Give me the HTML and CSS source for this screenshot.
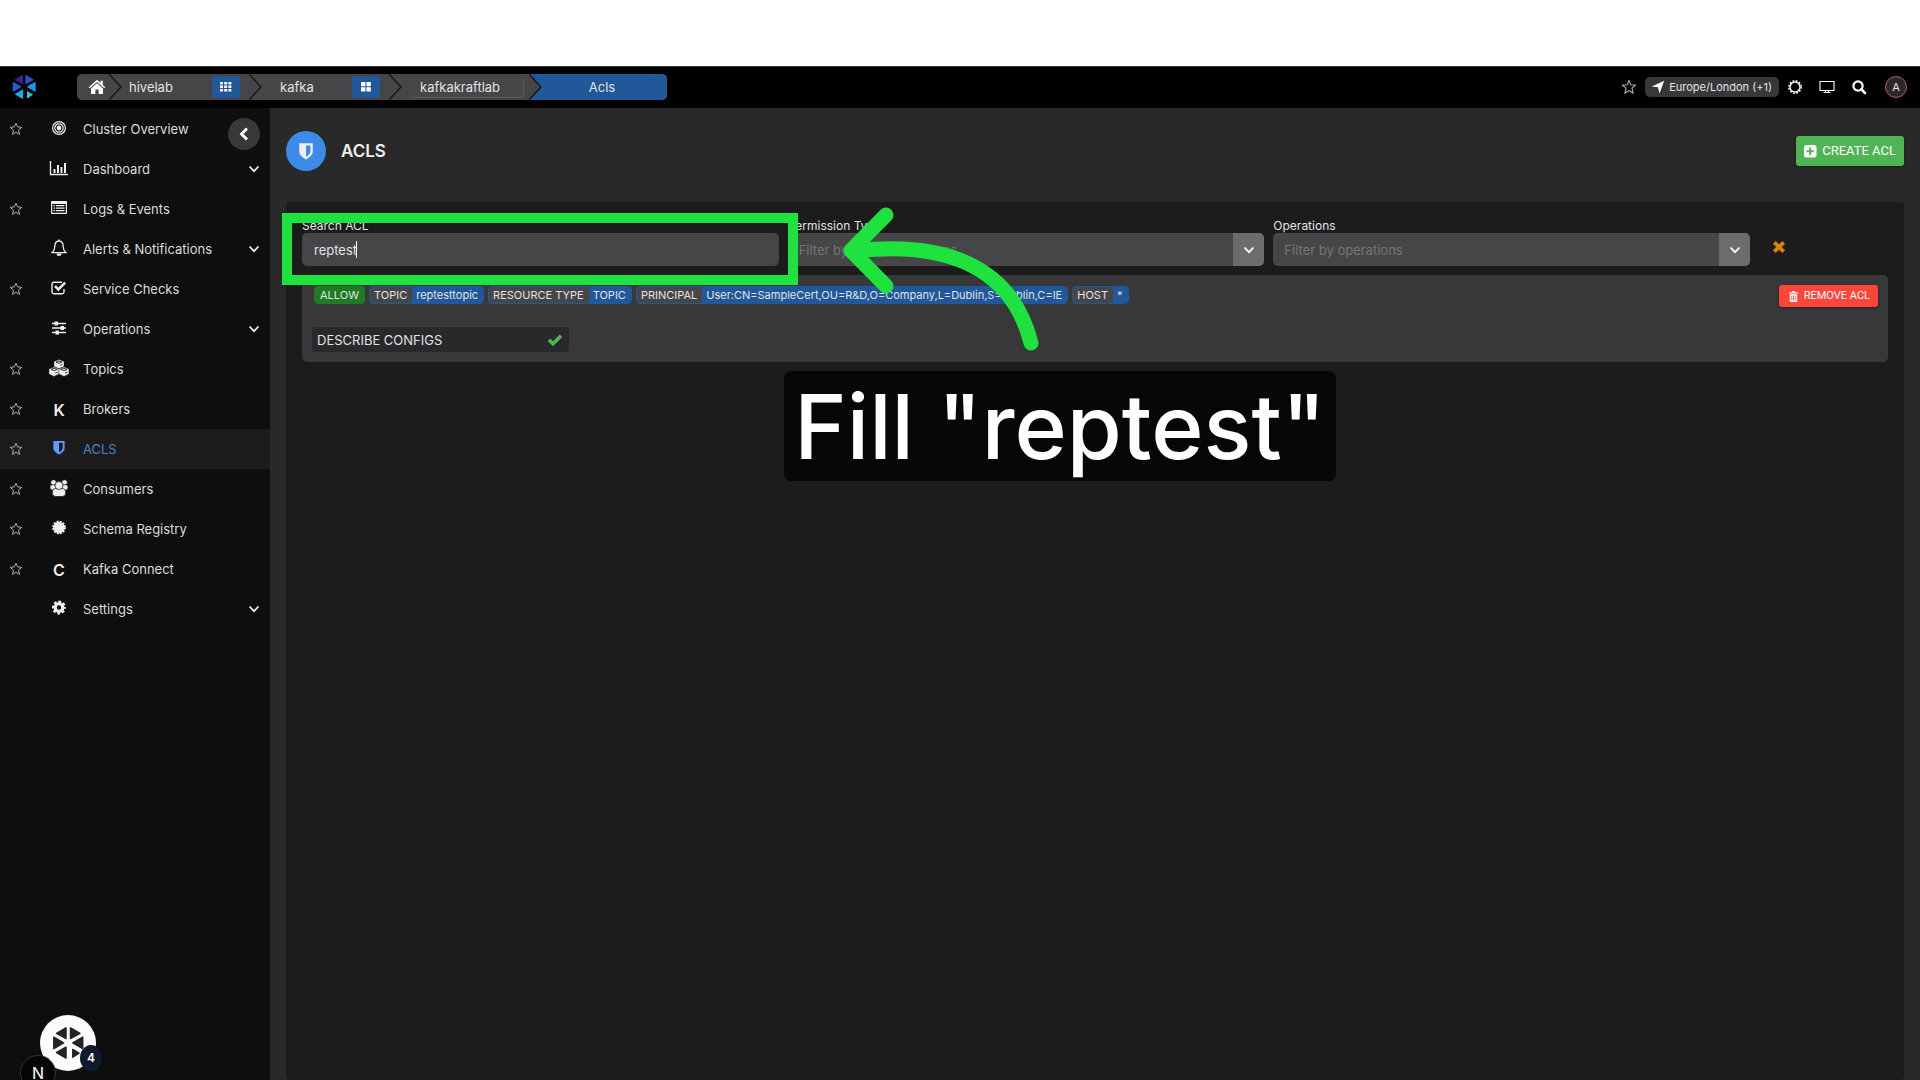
FILE: index.html
```html
<!DOCTYPE html>
<html lang="en">
<head>
<meta charset="utf-8">
<title>ACLS</title>
<link rel="stylesheet" href="styles.css">
</head>
<body>
<svg class="defs" width="0" height="0" aria-hidden="true">
  <symbol id="star" viewBox="0 0 14 14"><path d="M7 1.2 8.6 5 12.8 5.3 9.6 8 10.6 12.4 7 10.1 3.4 12.4 4.4 8 1.2 5.3 5.4 5Z" fill="none" stroke="currentColor" stroke-width="1" stroke-linejoin="round"/></symbol>
  <symbol id="down" viewBox="0 0 12 8"><path d="M1.5 1.5 6 6.2 10.500 1.5" fill="none" stroke="currentColor" stroke-width="1.800"/></symbol>
  <symbol id="shield" viewBox="0 0 14 16"><path fill-rule="evenodd" d="M1 1H13V8.500C13 12 9.500 14 7 15.500C4.500 14 1 12 1 8.500ZM7 3V13.200C8.800 12.100 11 10.700 11 8.500V3Z" fill="currentColor"/></symbol>
  <symbol id="wheel" viewBox="0 0 32 34">
    <g stroke-linejoin="round" stroke-width="1.500">
      <path class="w1" d="M14 1.800V12.500L4.600 7.300Z"/><path class="w2" d="M18.500 1.800V12.500L28 7.300Z"/>
      <path class="w3" d="M1.800 11.200 11.600 16.800 1.800 22.500Z"/><path class="w4" d="M30.700 11.200 20.800 16.800 30.700 22.500Z"/>
      <path class="w5" d="M4.600 26.500 14 21.200V32Z"/><path class="w6" d="M20.800 23.500V31.200L27 27.200Z"/>
    </g>
  </symbol>
</svg>

<div class="top-strip"></div>

<header class="topbar">
  <a class="logo" href="#" aria-label="Home page"><svg width="24" height="26"><use href="#wheel"/></svg></a>
  <nav class="crumbs" aria-label="Breadcrumb">
    <a class="crumb crumb-home" href="#" aria-label="Home">
      <svg width="18" height="16" viewBox="0 0 18 16"><path fill="currentColor" d="M9 .8 12.500 3.900V1.800H14.800V5.900L17.300 8.200 16.300 9.300 9 3 1.700 9.300.7 8.200ZM9 4.200 15 9.400V15H10.600V10.400H7.400V15H3V9.400Z"/></svg>
    </a>
    <svg class="sep" width="13" height="26" viewBox="0 0 13 26"><path d="M0 0 12 13 0 26"/></svg>
    <div class="crumb"><a href="#">hivelab</a>
      <button class="crumb-btn" aria-label="Grid"><svg width="12" height="10" viewBox="0 0 12 10"><path fill="#fff" d="M0 0h3v2.600H0zM4.200 0h3v2.600h-3zM8.400 0h3v2.600h-3zM0 3.500h3v2.600H0zM4.200 3.500h3v2.600h-3zM8.400 3.500h3v2.600h-3zM0 7h3v2.600H0zM4.200 7h3v2.600h-3zM8.400 7h3v2.600h-3z"/></svg></button>
    </div>
    <svg class="sep" width="13" height="26" viewBox="0 0 13 26"><path d="M0 0 12 13 0 26"/></svg>
    <div class="crumb crumb-wide"><a href="#">kafka</a>
      <button class="crumb-btn" aria-label="Clusters"><svg width="12" height="10" viewBox="0 0 12 10"><path fill="#fff" d="M1 0h4.400v4.300H1zM6.400 0h4.400v4.300H6.400zM1 5.300h4.400v4.300H1zM6.400 5.300h4.400v4.300H6.400z"/></svg></button>
    </div>
    <svg class="sep" width="13" height="26" viewBox="0 0 13 26"><path d="M0 0 12 13 0 26"/></svg>
    <div class="crumb crumb-wide"><a class="crumb-box" href="#">kafkakraftlab</a></div>
    <svg class="sep sep-last" width="13" height="26" viewBox="0 0 13 26"><path class="sep-fill" d="M0 0H13V26H0L12 13Z"/><path d="M0 0 12 13 0 26"/></svg>
    <a class="crumb crumb-current" href="#" aria-current="page">Acls</a>
  </nav>
  <div class="tools">
    <button class="tool dim" aria-label="Favourite"><svg width="16" height="16"><use href="#star"/></svg></button>
    <button class="zone"><svg width="14" height="14" viewBox="0 0 14 14"><path fill="currentColor" d="M13.200.8 8.500 13.500 7 7.300.8 6.500Z"/></svg>Europe/London (+1)</button>
    <button class="tool" aria-label="Theme"><svg width="16" height="16" viewBox="0 0 16 16"><circle cx="8" cy="8" r="5" fill="none" stroke="currentColor" stroke-width="1.400"/><circle cx="8" cy="8" r="6.200" fill="none" stroke="currentColor" stroke-width="1.500" stroke-dasharray="1.700 1.546"/></svg></button>
    <button class="tool" aria-label="Screen"><svg width="16" height="16" viewBox="0 0 16 16"><path fill="none" stroke="currentColor" stroke-width="1.100" d="M1 2.500H15V11.500H1ZM6.500 11.500V13.500M9.500 11.500V13.500M4.500 13.500H11.500"/></svg></button>
    <button class="tool" aria-label="Search"><svg width="16" height="16" viewBox="0 0 16 16"><circle cx="7" cy="7" r="4.600" fill="none" stroke="currentColor" stroke-width="2.200"/><path d="M10.200 10.200 14 14" stroke="currentColor" stroke-width="2.600" stroke-linecap="round"/></svg></button>
    <button class="avatar">A</button>
  </div>
</header>

<div class="layout">
  <nav class="sidebar" aria-label="Cluster">
    <button class="collapse" aria-label="Collapse menu"><svg width="12" height="14" viewBox="0 0 12 14"><path d="M9 1.500 3.500 7 9 12.500" fill="none" stroke="#fff" stroke-width="2.800"/></svg></button>
    <a class="item" href="#"><svg class="fav"><use href="#star"/></svg><svg class="ico" viewBox="0 0 20 18"><g fill="none" stroke="currentColor" stroke-width="1.200"><circle cx="10" cy="9" r="6.400"/><circle cx="10" cy="9" r="4.200"/></g><circle cx="10" cy="9" r="2.400" fill="currentColor"/></svg><span>Cluster Overview</span></a>
    <a class="item" href="#"><i class="fav"></i><svg class="ico" viewBox="0 0 20 18"><path d="M1.500 2V15.500H19" fill="none" stroke="currentColor" stroke-width="1.400"/><path fill="currentColor" d="M4.500 10h2v4h-2zM8 6h2v8H8zM11.500 8h2v6h-2zM15 4h2v10h-2z"/></svg><span>Dashboard</span><svg class="down"><use href="#down"/></svg></a>
    <a class="item" href="#"><svg class="fav"><use href="#star"/></svg><svg class="ico" viewBox="0 0 20 18"><path fill-rule="evenodd" fill="currentColor" d="M3 2H17a1 1 0 0 1 1 1V14a1 1 0 0 1-1 1H3a1 1 0 0 1-1-1V3a1 1 0 0 1 1-1ZM3.200 5V13.800H16.800V5ZM4.500 6H6V7.200H4.500ZM7 6H15.500V7.200H7ZM4.500 8.500H6V9.700H4.500ZM7 8.500H15.500V9.700H7ZM4.500 11H6V12.200H4.500ZM7 11H15.500V12.200H7Z"/></svg><span>Logs &amp; Events</span></a>
    <a class="item" href="#"><i class="fav"></i><svg class="ico" viewBox="0 0 20 18"><path d="M10 1.800C6.500 2.200 5.800 5 5.800 7.500 5.800 11 4.500 12.500 3.300 13.600H16.700C15.500 12.500 14.200 11 14.200 7.500 14.200 5 13.500 2.200 10 1.800Z" fill="none" stroke="currentColor" stroke-width="1.300"/><path d="M10 .5V2" stroke="currentColor" stroke-width="1.500"/><path d="M7.500 14.500H12.500A2.500 2.500 0 0 1 7.500 14.500Z" fill="currentColor"/></svg><span>Alerts &amp; Notifications</span><svg class="down"><use href="#down"/></svg></a>
    <a class="item" href="#"><svg class="fav"><use href="#star"/></svg><svg class="ico" viewBox="0 0 20 18"><path d="M13 3.200H5A2 2 0 0 0 3 5V13A2 2 0 0 0 5 14.800H13A2 2 0 0 0 15 13V10" fill="none" stroke="currentColor" stroke-width="1.400"/><path d="M6 7.200 9.300 10.500 16.200 3.600" fill="none" stroke="currentColor" stroke-width="2.600"/></svg><span>Service Checks</span></a>
    <a class="item" href="#"><i class="fav"></i><svg class="ico" viewBox="0 0 20 18"><path d="M3 4.500H17M3 9H17M3 13.500H17" stroke="currentColor" stroke-width="1.400"/><path fill="currentColor" d="M5.500 2.500h3.500v4H5.500zM11.500 7h3.500v4h-3.500zM6.500 11.500h3.500v4H6.500z"/></svg><span>Operations</span><svg class="down"><use href="#down"/></svg></a>
    <a class="item" href="#"><svg class="fav"><use href="#star"/></svg><svg class="ico" viewBox="0 0 20 18"><g fill="currentColor" stroke="#0e0e0e" stroke-width=".4"><path d="M10 .5 15 2.500V7.500L10 9.700 5 7.500V2.500Z"/><path d="M5 8 10 10V15L5 17.400 0 15V10Z"/><path d="M15 8 20 10V15L15 17.400 10 15V10Z"/></g><path d="M7 3.100 10 4.300 13 3.100 10 2ZM11.200 6.400 13.500 5.400M2 10.400 5.100 11.600 8.200 10.400 5.100 9.300ZM6.200 14.200 8.700 13M11.800 10.400 14.900 11.600 18 10.400 14.900 9.300ZM16 14.200 18.500 13" fill="none" stroke="#0e0e0e" stroke-width=".8"/></svg><span>Topics</span></a>
    <a class="item" href="#"><svg class="fav"><use href="#star"/></svg><b class="ico letter">K</b><span>Brokers</span></a>
    <a class="item active" href="#" aria-current="page"><svg class="fav"><use href="#star"/></svg><svg class="ico"><use href="#shield" x="3" y="1" width="14" height="15"/></svg><span>ACLS</span></a>
    <a class="item" href="#"><svg class="fav"><use href="#star"/></svg><svg class="ico" viewBox="0 0 20 18"><g fill="currentColor" stroke="#0e0e0e" stroke-width=".7"><circle cx="4.500" cy="3.500" r="2.800"/><circle cx="15.500" cy="3.500" r="2.800"/><rect x="1" y="5.800" width="6" height="5.200" rx="2"/><rect x="13" y="5.800" width="6" height="5.200" rx="2"/><rect x="3.300" y="9.500" width="13.400" height="8" rx="3.500"/><circle cx="10" cy="6.500" r="4"/></g></svg><span>Consumers</span></a>
    <a class="item" href="#"><svg class="fav"><use href="#star"/></svg><svg class="ico" viewBox="0 0 20 18"><circle cx="10" cy="8.500" r="5.800" fill="currentColor"/><circle cx="10" cy="8.500" r="6" fill="none" stroke="currentColor" stroke-width="1.800" stroke-dasharray="1.900 1.242"/></svg><span>Schema Registry</span></a>
    <a class="item" href="#"><svg class="fav"><use href="#star"/></svg><b class="ico letter">C</b><span>Kafka Connect</span></a>
    <a class="item" href="#"><i class="fav"></i><svg class="ico" viewBox="0 0 20 18"><circle cx="10" cy="8.500" r="3.800" fill="none" stroke="currentColor" stroke-width="3.200"/><circle cx="10" cy="8.500" r="5.900" fill="none" stroke="currentColor" stroke-width="2.200" stroke-dasharray="2.700 1.934" stroke-dashoffset="1.300"/></svg><span>Settings</span><svg class="down"><use href="#down"/></svg></a>
  </nav>

  <main class="main">
    <div class="page-head">
      <span class="page-icon"><svg width="16" height="18"><use href="#shield"/></svg></span>
      <h1>ACLS</h1>
      <button class="btn create"><svg width="13" height="13" viewBox="0 0 13 13"><rect width="12.500" height="12.500" rx="2.500" fill="#fff"/><path d="M6.200 2.500V10M2.500 6.200H10" stroke="#4fb454" stroke-width="2"/></svg>CREATE ACL</button>
    </div>

    <section class="panel">
      <form class="filters">
        <div class="field">
          <label for="search">Search ACL</label>
          <div class="control"><input id="search" type="text" value="reptest"><span class="caret"></span></div>
        </div>
        <div class="field">
          <label for="permission">Permission Type</label>
          <div class="control"><select id="permission"><option>Filter by permission types</option></select><span class="addon"><svg width="12" height="8"><use href="#down"/></svg></span></div>
        </div>
        <div class="field">
          <label for="operations">Operations</label>
          <div class="control"><select id="operations"><option>Filter by operations</option></select><span class="addon"><svg width="12" height="8"><use href="#down"/></svg></span></div>
        </div>
        <button class="clear" type="button" aria-label="Clear filters"><svg width="14" height="14" viewBox="0 0 14 14"><path d="M2.300 2.300 11.700 11.700M11.700 2.300 2.300 11.700" stroke="#db8400" stroke-width="3.800"/></svg></button>
        <div class="annotation">
          <svg class="arrow" width="200" height="150" viewBox="0 0 200 150"><path d="M47 14 12 49.500 47 85M16 50C101 40 172 62 192 142" fill="none" stroke="#1ee33e" stroke-width="15" stroke-linecap="round" stroke-linejoin="round"/></svg>
        </div>
      </form>

      <article class="acl">
        <div class="acl-head">
          <div class="tags">
            <span class="tag allow">ALLOW</span>
            <span class="tag"><span>TOPIC</span><b>reptesttopic</b></span>
            <span class="tag"><span>RESOURCE TYPE</span><b>TOPIC</b></span>
            <span class="tag"><span>PRINCIPAL</span><b>User:CN=SampleCert,OU=R&amp;D,O=Company,L=Dublin,S=Dublin,C=IE</b></span>
            <span class="tag"><span>HOST</span><b>*</b></span>
          </div>
          <button class="btn remove"><svg width="9" height="11" viewBox="0 0 9 11"><path fill="#fff" fill-rule="evenodd" d="M3 0H6V1.200H9V2.600H0V1.200H3ZM.8 3.200H8.200V11H.8ZM2.400 4.500V9.600H3.200V4.500ZM4.100 4.500V9.600H4.900V4.500ZM5.800 4.500V9.600H6.600V4.500Z"/></svg>REMOVE ACL</button>
        </div>
        <div class="operation">DESCRIBE CONFIGS<svg width="16" height="14" viewBox="0 0 16 14"><path d="M2 6.800 6 10.800 14 2.800" fill="none" stroke="#4fb454" stroke-width="3.600"/></svg></div>
        <p class="callout">Fill "reptest"</p>
      </article>
    </section>
  </main>
</div>

<button class="widget" aria-label="Support"><svg width="32" height="34"><use href="#wheel"/></svg><span class="count">4</span></button>
<button class="devtool">N</button>
</body>
</html>
```

FILE: styles.css
```css
* { box-sizing: border-box; }
body {
  margin: 0;
  min-height: 100vh;
  display: flex;
  flex-direction: column;
  background: #292929;
  color: #e2e2e2;
  font: 13px/16px Inter, "Liberation Sans", sans-serif;
}
a { color: inherit; text-decoration: none; }
button { margin: 0; padding: 0; border: 0; background: none; color: inherit; font: inherit; }
svg { display: block; flex: none; }
.defs { position: absolute; }

/* Six-blade wheel: the blades take their colours from the place of use */
.w1 { fill: var(--w1); stroke: var(--w1); }
.w2 { fill: var(--w2); stroke: var(--w2); }
.w3 { fill: var(--w3); stroke: var(--w3); }
.w4 { fill: var(--w4); stroke: var(--w4); }
.w5 { fill: var(--w5); stroke: var(--w5); }
.w6 { fill: var(--w6); stroke: var(--w6); }

.top-strip { height: 66px; background: #fff; }

/* Top bar */
.topbar {
  height: 42px;
  display: flex;
  align-items: center;
  padding: 0 13px 1px 12px;
  background: #000;
  border-top: 1px solid #3a3a3a;
}
.logo {
  width: 65px;
  --w1: #3a2390;
  --w2: #2850c8;
  --w3: #1c62d8;
  --w4: #159bf0;
  --w5: #10aef8;
  --w6: #35c4d4;
}
.crumbs {
  height: 26px;
  display: flex;
  align-items: center;
  background: #464648;
  border-radius: 5px;
  overflow: hidden;
}
.crumb {
  width: 127px;
  height: 26px;
  display: flex;
  align-items: center;
  justify-content: space-between;
  padding: 0 9px 0 7px;
}
.crumb-wide { padding-left: 18px; }
.crumb-home { width: 32px; padding: 0 0 0 11px; color: #fff; }
.crumb-box { position: relative; }
.crumb-box::after {
  content: "";
  position: absolute;
  inset: -3px -24px -3px -10px;
  border: solid #59595b;
  border-width: 0 1px 1px 0;
  border-radius: 4px;
}
.crumb-current { width: 125px; justify-content: center; background: #205899; padding-right: 12px; }
.crumb-btn {
  width: 28px;
  height: 22px;
  display: grid;
  place-items: center;
  background: #205899;
  border-radius: 3px;
}
.sep { fill: none; stroke: #171717; stroke-width: 1.5; }
.sep-fill { fill: #205899; stroke: none; }
.tools { margin-left: auto; display: flex; align-items: center; gap: 16px; }
.tool.dim { color: #aaa; margin-right: -8px; }
.zone {
  height: 20px;
  display: flex;
  align-items: center;
  gap: 4px;
  padding: 0 7px 0 6px;
  margin-right: -8px;
  border-radius: 5px;
  background: #38383a;
  font-size: 11px;
}
.zone svg, .tool { color: #fff; }
.avatar {
  width: 22px;
  height: 22px;
  margin-left: 2px;
  border: 1px solid #b5597f;
  border-radius: 50%;
  background: #29292b;
  font-size: 11px;
}

/* Sidebar */
.layout { flex: 1; display: flex; }
.sidebar { position: relative; width: 270px; flex: none; padding-top: 1px; background: #0e0e0e; }
.collapse {
  position: absolute;
  top: 10px;
  right: 10px;
  width: 32px;
  height: 32px;
  display: grid;
  place-items: center;
  border-radius: 50%;
  background: #38383a;
}
.item {
  height: 40px;
  display: flex;
  align-items: center;
  padding: 0 10px 0 9px;
  color: #dcdcdc;
}
.item.active { background: #1c1c1c; color: #4b80cc; }
.item .fav { width: 14px; height: 14px; color: #aaa; }
.ico { width: 20px; height: 18px; margin: 0 14px 2px 26px; color: #eee; }
.active .ico { color: #5c9cff; }
.letter { font-size: 16px; line-height: 20px; text-align: center; font-weight: 600; margin-bottom: 0; }
.down { width: 12px; height: 8px; margin-left: auto; color: #eee; }

/* Main area */
.main { flex: 1; min-width: 0; display: flex; flex-direction: column; padding: 23px 16px 0; }
.page-head { display: flex; align-items: center; gap: 15px; height: 40px; margin-bottom: 31px; }
.page-icon {
  width: 40px;
  height: 40px;
  display: grid;
  place-items: center;
  border-radius: 50%;
  background: #3c8be8;
  color: #eee;
}
h1 { margin: 0; font-size: 17px; line-height: 24px; font-weight: 600; color: #eee; }
.btn {
  display: flex;
  align-items: center;
  color: #fff;
  font-family: Roboto, sans-serif;
  border-radius: 3px;
  box-shadow: 0 1px 3px rgba(0, 0, 0, .4);
}
.create { height: 30px; margin-left: auto; padding: 0 8px; gap: 5px; background: #4fb454; font-size: 13px; }
.panel { flex: 1; padding: 15px 16px; background: #1c1c1c; border-radius: 4px; }

.filters { position: relative; z-index: 1; display: flex; gap: 9px; padding-right: 138px; }
.field { flex: 1; min-width: 0; }
.field label { display: block; padding-top: 2px; font-size: 12px; line-height: 14px; }
.control {
  position: relative;
  display: flex;
  height: 33px;
  background: #464648;
  border-radius: 5px;
  overflow: hidden;
}
.control input, .control select {
  flex: 1;
  min-width: 0;
  padding: 0 12px;
  border: 0;
  outline: 0;
  appearance: none;
  background: none;
  color: #e2e2e2;
  font: inherit;
}
.control select { padding: 0 11px; color: #747476; }
.caret { position: absolute; left: 54px; top: 8px; width: 1px; height: 17px; background: #fff; }
.addon { width: 31px; display: grid; place-items: center; background: #6c6c6e; color: #fff; }
.clear { position: absolute; right: 102px; top: 23px; }

.annotation {
  position: absolute;
  top: -4px;
  left: -20px;
  width: calc((100% - 156px) / 3 + 39px);
  height: 72px;
  border: 10px solid #1ee33e;
}
.arrow { position: absolute; left: 547px; top: -22px; }

/* ACL card */
.acl {
  position: relative;
  margin-top: 9px;
  min-height: 87px;
  padding: 10px;
  background: #38383a;
  border-radius: 5px;
}
.acl-head { display: flex; justify-content: space-between; align-items: flex-start; min-height: 42px; }
.tags { display: flex; gap: 4px; padding: 1px 2px; font-size: 11px; line-height: 16px; }
.tag {
  display: flex;
  border: 1px solid #205899;
  border-radius: 4px;
  background: #464648;
  overflow: hidden;
}
.tag > * { padding: 0 5px 0 4px; font-weight: 400; }
.tag b { background: #205899; }
.tag.allow { padding: 0 5px; background: #207a23; border-color: #207a23; }
.remove { height: 22px; padding: 0 8px 0 10px; gap: 6px; background: #ff453a; font-size: 11px; }
.operation {
  width: 257px;
  height: 25px;
  display: flex;
  align-items: center;
  justify-content: space-between;
  padding: 0 6px 0 5px;
  border-radius: 3px;
  background: #29292b;
}
.callout {
  position: absolute;
  top: 96px;
  left: 482px;
  width: 552px;
  margin: 0;
  padding-top: 2px;
  border-radius: 7px;
  background: #070707;
  color: #fff;
  font-size: 89px;
  line-height: 108px;
  font-weight: 500;
  text-align: center;
  white-space: nowrap;
}

/* Floating buttons */
.widget {
  position: fixed;
  left: 40px;
  bottom: 9px;
  width: 56px;
  height: 56px;
  display: grid;
  place-items: center;
  border-radius: 50%;
  background: #fafcfd;
  --w1: #272225;
  --w2: #272225;
  --w3: #272225;
  --w4: #272225;
  --w5: #272225;
  --w6: #272225;
}
.count {
  position: absolute;
  right: -6px;
  bottom: 0;
  width: 22px;
  height: 26px;
  border-radius: 50%;
  background: #101a2e;
  color: #fff;
  font-size: 12px;
  line-height: 26px;
  font-weight: 600;
}
.devtool {
  position: fixed;
  left: 20px;
  bottom: -11px;
  width: 36px;
  height: 36px;
  border: 1px solid #333;
  border-radius: 50%;
  background: #050505;
  color: #fff;
  font-size: 16px;
}
```
